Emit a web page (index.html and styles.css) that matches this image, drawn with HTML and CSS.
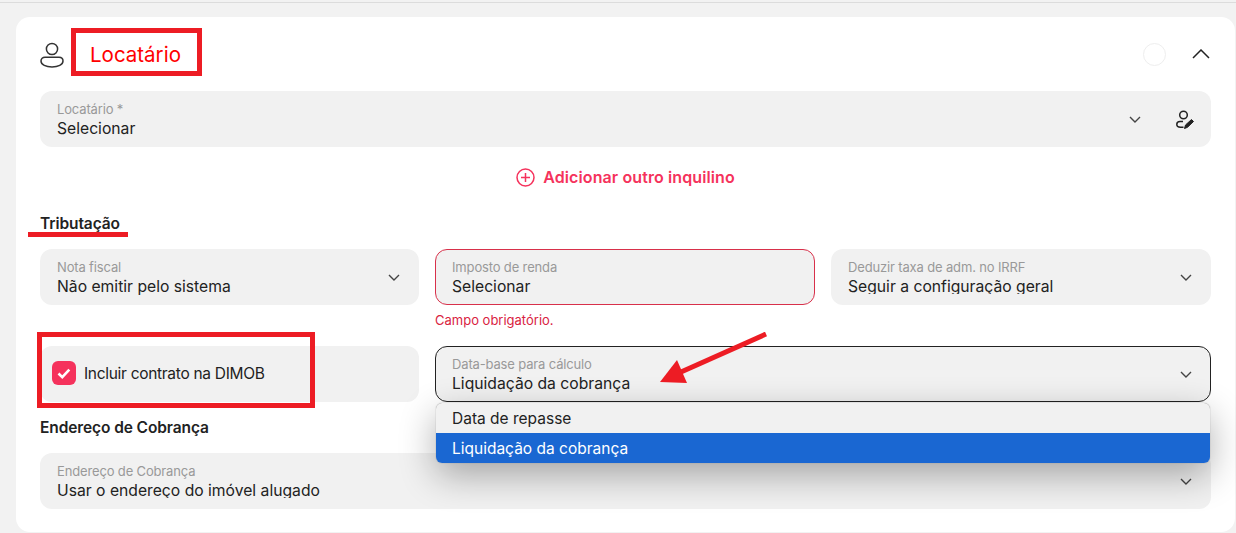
FILE: index.html
```html
<!DOCTYPE html>
<html lang="pt-BR">
<head>
    <meta charset="UTF-8">
    <title>Locatário</title>
    <link rel="stylesheet" href="styles.css">
</head>
<body>

    <div class="top-line"></div>

    <section class="card">
        <header class="card-header">
            <svg class="user-icon" width="24" height="26" viewBox="0 0 24 26" fill="none" stroke="#333" stroke-width="1.5">
                <circle cx="12" cy="7" r="5.6"/>
                <path d="M5 15.2h14c2.3 0 4 1.4 4 3.8 0 3.8-5 6-11 6S1 22.800 1 19c0-2.400 1.700-3.800 4-3.800z"/>
            </svg>
            <h2 class="card-title">Locatário</h2>
            <span class="status-dot"></span>
            <svg class="collapse-icon" width="18" height="10" viewBox="0 0 18 10" fill="none" stroke="#222" stroke-width="1.500">
                <path d="M1 9l8-8 8 8"/>
            </svg>
        </header>

        <div class="field tenant-field">
            <div class="field-text">
                <span class="field-label">Locatário *</span>
                <span class="field-value">Selecionar</span>
            </div>
            <svg class="chevron" width="12" height="7" viewBox="0 0 12 7" fill="none" stroke="#444" stroke-width="1.400">
                <path d="M1 1l5 5 5-5"/>
            </svg>
            <svg class="edit-user" width="18" height="20" viewBox="0 0 18 20" fill="none" stroke="#222" stroke-width="1.500">
                <circle cx="7.500" cy="5" r="3.800"/>
                <path d="M7 11.500H4C1.800 11.500.8 12.800.8 14.300c0 1.700 1.500 3 3.700 3h3"/>
                <path d="M8.500 18.500l1-3.500 6-5.500 2 2-6 5.800z" fill="#222" stroke-width="1"/>
            </svg>
        </div>

        <div class="add-tenant">
            <svg width="19" height="19" viewBox="0 0 19 19" fill="none" stroke="#f5325c" stroke-width="1.500">
                <circle cx="9.500" cy="9.500" r="8.500"/>
                <path d="M9.500 5v9M5 9.500h9"/>
            </svg>
            <span>Adicionar outro inquilino</span>
        </div>

        <h3 class="section-title tax-title">Tributação</h3>

        <div class="tax-grid">
            <div class="field">
                <div class="field-text">
                    <span class="field-label">Nota fiscal</span>
                    <span class="field-value">Não emitir pelo sistema</span>
                </div>
                <svg class="chevron" width="12" height="7" viewBox="0 0 12 7" fill="none" stroke="#444" stroke-width="1.400">
                    <path d="M1 1l5 5 5-5"/>
                </svg>
            </div>

            <div>
                <div class="field field-error">
                    <div class="field-text">
                        <span class="field-label">Imposto de renda</span>
                        <span class="field-value">Selecionar</span>
                    </div>
                </div>
                <p class="error-message">Campo obrigatório.</p>
            </div>

            <div class="field">
                <div class="field-text">
                    <span class="field-label">Deduzir taxa de adm. no IRRF</span>
                    <span class="field-value value-cut">Seguir a configuração geral</span>
                </div>
                <svg class="chevron" width="12" height="7" viewBox="0 0 12 7" fill="none" stroke="#444" stroke-width="1.400">
                    <path d="M1 1l5 5 5-5"/>
                </svg>
            </div>

            <label class="field check-field">
                <span class="checkbox">
                    <svg width="14" height="11" viewBox="0 0 14 11" fill="none" stroke="#fff" stroke-width="2.600">
                        <path d="M1.500 5.500l3.800 3.600 7-7.400"/>
                    </svg>
                </span>
                <span class="check-text">Incluir contrato na DIMOB</span>
            </label>

            <div class="base-date">
                <div class="field field-open">
                    <div class="field-text">
                        <span class="field-label">Data-base para cálculo</span>
                        <span class="field-value">Liquidação da cobrança</span>
                    </div>
                    <svg class="chevron" width="12" height="7" viewBox="0 0 12 7" fill="none" stroke="#444" stroke-width="1.400">
                        <path d="M1 1l5 5 5-5"/>
                    </svg>
                </div>
                <ul class="dropdown">
                    <li>Data de repasse</li>
                    <li class="selected">Liquidação da cobrança</li>
                </ul>
            </div>
        </div>

        <h3 class="section-title address-title">Endereço de Cobrança</h3>

        <div class="field">
            <div class="field-text">
                <span class="field-label">Endereço de Cobrança</span>
                <span class="field-value value-cut">Usar o endereço do imóvel alugado</span>
            </div>
            <svg class="chevron" width="12" height="7" viewBox="0 0 12 7" fill="none" stroke="#444" stroke-width="1.400">
                <path d="M1 1l5 5 5-5"/>
            </svg>
        </div>
    </section>

    <!-- Red marks drawn on top of the screenshot -->
    <div class="mark mark-title"></div>
    <div class="mark mark-check"></div>
    <div class="mark-line"></div>
    <svg class="mark-arrow" width="110" height="54" viewBox="0 0 110 54">
        <path d="M107 2L22 40" stroke="#ed1c24" stroke-width="5" fill="none"/>
        <path d="M1 50L18 28 28 51z" fill="#ed1c24"/>
    </svg>

</body>
</html>
```

FILE: styles.css
```css
html,
body {
    height: 533px;
    overflow: hidden;
}

body {
    margin: 0;
    background-color: #f2f2f2;
    font-family: Inter, "Noto Sans", sans-serif;
    color: #222;
    position: relative;
}

.top-line {
    height: 1px;
    margin-top: 2px;
    background-color: #dcdcdc;
}

.card {
    margin: 14px 1px 0 16px;
    padding: 0 24px;
    height: 515px;
    box-sizing: border-box;
    background-color: #fff;
    border-radius: 14px;
}

.card-header {
    display: flex;
    align-items: center;
    height: 74px;
}

.user-icon {
    margin-top: 1px;
}

.card-title {
    margin: 0 0 0 26px;
    font-size: 20.5px;
    font-weight: 400;
    color: #f00;
}

.status-dot {
    width: 21px;
    height: 21px;
    margin-left: auto;
    border: 1px solid #eee;
    border-radius: 50%;
}

.collapse-icon {
    margin: 0 1px 0 26px;
}

/* Grey select boxes */
.field {
    display: flex;
    align-items: center;
    height: 56px;
    box-sizing: border-box;
    padding: 0 17px;
    background-color: #f1f1f1;
    border-radius: 12px;
}

.field-text {
    flex: 1;
    min-width: 0;
    display: flex;
    flex-direction: column;
    padding-top: 2px;
}

.field-label {
    font-size: 13px;
    line-height: 17px;
    letter-spacing: -0.15px;
    color: #999;
}

.field-value {
    font-size: 15.7px;
    line-height: 21px;
    color: #222;
}

.value-cut {
    height: 18px;
    margin-bottom: 3px;
    overflow: hidden;
}

.chevron {
    flex: none;
    margin-right: 2px;
}

.edit-user {
    margin: 1px 0 0 33px;
}

.add-tenant {
    display: flex;
    align-items: center;
    justify-content: center;
    gap: 8px;
    height: 60px;
    font-size: 16px;
    font-weight: 600;
    letter-spacing: 0.1px;
    color: #f5325c;
}

.section-title {
    margin: 0;
    font-size: 15.5px;
    line-height: 20px;
    font-weight: 600;
    letter-spacing: -0.1px;
    color: #222;
}

.tax-title {
    margin-top: 7px;
    margin-bottom: 15px;
}

.address-title {
    margin-top: 16px;
    margin-bottom: 15px;
}

.tax-grid {
    display: grid;
    grid-template-columns: 379px 380px 380px;
    gap: 18px 16px;
    align-items: start;
}

.field-error {
    border: 1px solid #d8304a;
    padding: 0 16px;
}

.error-message {
    margin: 7px 0 0;
    font-size: 13px;
    line-height: 16px;
    color: #d9233f;
}

.check-field {
    padding: 0 0 2px 12px;
    gap: 8px;
}

.checkbox {
    display: flex;
    align-items: center;
    justify-content: center;
    width: 24px;
    height: 24px;
    background-color: #f5325c;
    border-radius: 6px;
}

.check-text {
    font-size: 15.5px;
    letter-spacing: -0.3px;
    color: #222;
}

.base-date {
    grid-column: span 2;
    position: relative;
}

.field-open {
    border: 1px solid #222;
    padding: 0 16px;
}

/* Open list of the select */
.dropdown {
    position: absolute;
    top: 57px;
    left: 1px;
    right: 1px;
    z-index: 2;
    margin: 0;
    padding: 0;
    list-style: none;
    overflow: hidden;
    font-size: 15.500px;
    background-color: #f1f1f1;
    border-radius: 6px;
    box-shadow: 0 0 1px #777, 0 12px 36px rgba(0, 0, 0, 0.32);
}

.dropdown li {
    height: 30px;
    line-height: 32px;
    padding-left: 16px;
}

.dropdown li.selected {
    background-color: #1a67d2;
    color: #fff;
}

/* Annotations */
.mark {
    position: absolute;
    box-sizing: border-box;
    border: 5px solid #ed1c24;
    z-index: 3;
}

.mark-title {
    left: 71px;
    top: 28px;
    width: 131px;
    height: 48px;
}

.mark-check {
    left: 37px;
    top: 332px;
    width: 278px;
    height: 76px;
}

.mark-line {
    position: absolute;
    left: 28px;
    top: 232px;
    width: 100px;
    height: 5px;
    background-color: #ed1c24;
    z-index: 3;
}

.mark-arrow {
    position: absolute;
    left: 659px;
    top: 332px;
    z-index: 3;
}
```
